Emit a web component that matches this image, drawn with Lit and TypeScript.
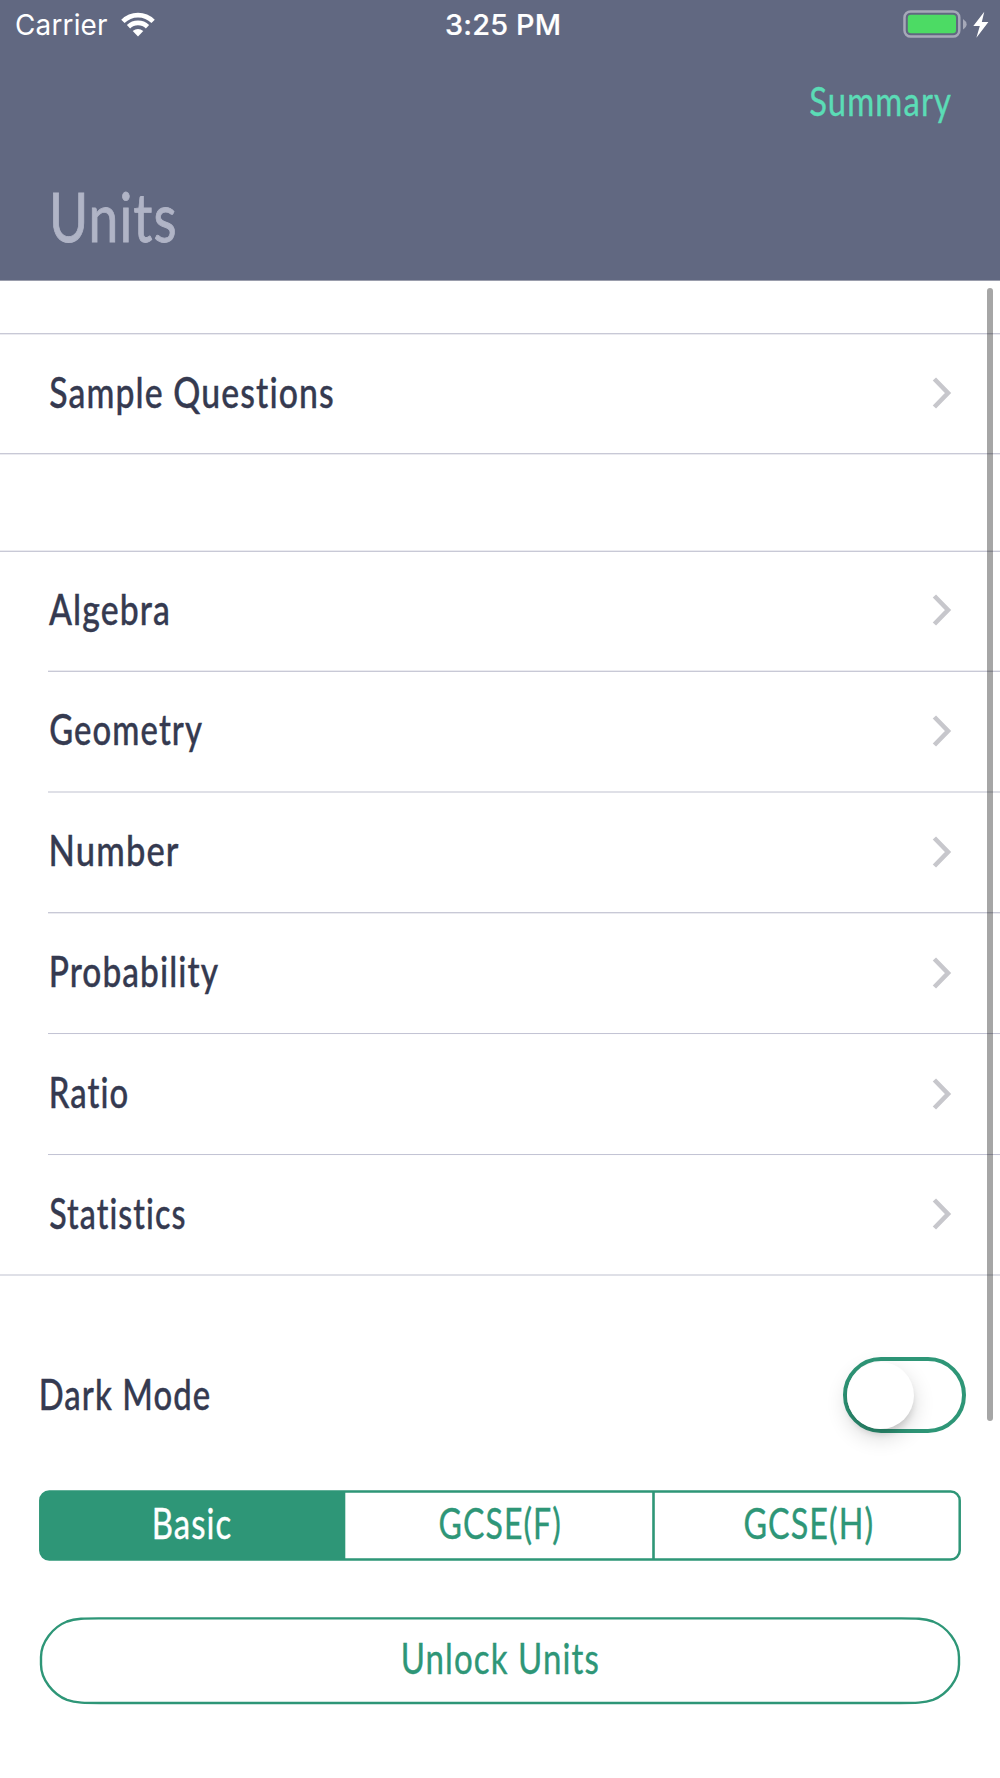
import { LitElement, html, css } from "lit";
import { customElement, property, state } from "lit/decorators.js";

/** One line of text whose drawn glyphs span exactly `span` pixels. */
@customElement("fit-label")
class FitLabel extends LitElement {
  @property() text = "";
  @property({ type: Number }) span = 100;
  @state() private scale = 1;
  @state() private shift = 0;

  static styles = css`
    :host {
      display: block;
      flex: none;
      white-space: pre;
      line-height: 1.2;
    }
    .line {
      display: block;
      width: max-content;
      transform-origin: 0 0;
    }
  `;

  firstUpdated() {
    const style = getComputedStyle(this);
    const ctx = document.createElement("canvas").getContext("2d") as any;
    ctx.font = `${style.fontWeight} ${style.fontSize} ${style.fontFamily}`;
    ctx.letterSpacing = style.letterSpacing === "normal" ? "0px" : style.letterSpacing;
    const m = ctx.measureText(this.text);
    const ink = m.actualBoundingBoxLeft + m.actualBoundingBoxRight;
    this.scale = this.span / ink;
    this.shift = m.actualBoundingBoxLeft * this.scale;
  }

  render() {
    return html`<style>:host { width: ${this.span}px; }</style
      ><span class="line" style="transform: translateX(${this.shift}px) scaleX(${this.scale})">${this.text}</span>`;
  }
}

interface Unit {
  name: string;
  span: number;
  inset: number;
  rule: "down" | "up" | "even" | "thin";
  height: number;
}

const units: Unit[] = [
  { name: "Algebra", span: 119, inset: 49, rule: "up", height: 118 },
  { name: "Geometry", span: 152, inset: 50, rule: "even", height: 119 },
  { name: "Number", span: 127.8, inset: 51, rule: "down", height: 119 },
  { name: "Probability", span: 167, inset: 51, rule: "thin", height: 119 },
  { name: "Ratio", span: 76.3, inset: 51, rule: "thin", height: 119 },
  { name: "Statistics", span: 134.3, inset: 50, rule: "even", height: 118 },
];

@customElement("app-root")
class AppRoot extends LitElement {
  static styles = css`
    :host {
      display: block;
      width: 1000px;
      height: 1778px;
      overflow: hidden;
      position: relative;
      background: #fff;
      color: #353a50;
      font-family: Lato, "Open Sans", sans-serif;
      font-size: 42.5px;
      font-weight: 500;
      letter-spacing: 1.4px;
      -webkit-text-stroke: 0.4px currentColor;
    }
    .header {
      box-sizing: border-box;
      height: 281px;
      background: #616881;
      border-bottom: 1px solid #9a9dac;
      display: flex;
      flex-direction: column;
    }
    .status {
      height: 50px;
      display: grid;
      grid-template-columns: 446px 456px 1fr;
      color: #fff;
      font-family: Inter, Roboto, sans-serif;
      font-size: 28px;
      font-weight: 400;
      letter-spacing: 0.2px;
      -webkit-text-stroke: 0;
    }
    .carrier {
      display: flex;
      gap: 13px;
      padding: 9px 0 0 16px;
    }
    .wifi {
      display: block;
      margin-top: 2px;
    }
    .time {
      padding-top: 9px;
      font-weight: 500;
      -webkit-text-stroke: 0.2px currentColor;
    }
    .power {
      display: block;
      margin-top: 9px;
    }
    .actions {
      display: flex;
      justify-content: flex-end;
      padding: 27px 49px 0 0;
      color: #5bdcb6;
      font-size: 40.5px;
      font-weight: 400;
    }
    .title {
      padding: 50px 0 0 52.7px;
      color: #b0b4c6;
      font-size: 67px;
      font-weight: 400;
      -webkit-text-stroke: 0.9px currentColor;
    }
    .gap-top {
      height: 52px;
    }
    .gap {
      height: 95px;
    }
    .row {
      display: flex;
      align-items: center;
      justify-content: space-between;
      box-sizing: border-box;
      padding: 0 48px 2px 0;
    }
    .name {
      padding-bottom: 4px;
    }
    .chevron {
      display: block;
    }
    .rule {
      height: 2px;
    }
    .inset {
      margin-left: 48px;
    }
    .down {
      background: linear-gradient(#c8c9d6 50%, #ebebf0 50%);
    }
    .up {
      background: linear-gradient(#ebebf0 50%, #c8c9d6 50%);
    }
    .even {
      background: #dfe0e7;
    }
    .thin {
      background: linear-gradient(#c3c4d4 50%, #fdfdfe 50%);
    }
    .mode {
      display: flex;
      justify-content: space-between;
      align-items: center;
      padding: 0 34px 0 41px;
      margin-top: 81px;
      height: 76px;
    }
    .toggle {
      box-sizing: border-box;
      width: 123px;
      height: 76px;
      border: 4px solid #2e9677;
      border-radius: 38px;
      display: flex;
      align-items: center;
    }
    .knob {
      width: 67px;
      height: 67px;
      border-radius: 50%;
      background: #fff;
      box-shadow: 0 8px 21px rgba(0, 0, 0, 0.16), 0 6px 6px -1px rgba(0, 0, 0, 0.12);
    }
    .segments {
      position: relative;
      display: grid;
      grid-template-columns: 306px 310px 307px;
      width: 923px;
      height: 71px;
      margin: 57px 0 0 39px;
      color: #2e9677;
      font-weight: 400;
    }
    .segment {
      position: relative;
      display: flex;
      justify-content: center;
      padding-top: 7px;
    }
    .selected {
      color: #fff;
    }
    .frame {
      position: absolute;
      inset: 0;
      display: block;
    }
    .unlock {
      position: relative;
      display: flex;
      justify-content: center;
      width: 923px;
      height: 90px;
      margin: 55px 0 0 39px;
      color: #2e9677;
      font-weight: 400;
    }
    .unlock-text {
      position: relative;
      padding-top: 16px;
    }
    .scrollbar {
      position: absolute;
      left: 987px;
      top: 288px;
      width: 6px;
      height: 1133px;
      border-radius: 3px;
      background: rgba(0, 0, 0, 0.35);
    }
  `;

  private row(name: string, span: number, inset: number, height: number) {
    return html`<div class="row" style="height:${height}px;padding-left:${inset}px">
      <fit-label class="name" .text=${name} .span=${span}></fit-label>
      <svg class="chevron" width="20" height="34" viewBox="0 0 20 34">
        <path d="M2.4 3 L16 17 L2.4 31" fill="none" stroke="#c7c7cc" stroke-width="4.6" />
      </svg>
    </div>`;
  }

  render() {
    return html`
      <div class="header">
        <div class="status">
          <div class="carrier">
            <fit-label .text=${"Carrier"} .span=${91}></fit-label>
            <svg class="wifi" width="36" height="27" viewBox="120 11 36 27">
              <g fill="none" stroke="#fff" stroke-width="4.7">
                <path d="M122.9 21.4 A21.3 21.3 0 0 1 153.1 21.4" />
                <path d="M128.5 26.7 A13.8 13.8 0 0 1 147.5 26.7" />
              </g>
              <path d="M132.7 31 Q138 26.8 143.3 31 L138 36.5 Z" fill="#fff" />
            </svg>
          </div>
          <div class="time"><fit-label .text=${"3:25 PM"} .span=${113.5}></fit-label></div>
          <svg class="power" width="88" height="30" viewBox="902 9 88 30">
            <rect x="904.5" y="11.4" width="54.8" height="25.2" rx="6.2" fill="none" stroke="#a6a9b8" stroke-width="2.5" />
            <rect x="907.8" y="14.8" width="48.2" height="18.4" rx="3.2" fill="#4cdb64" />
            <path d="M963 19 Q966.6 21.5 966.6 24.2 Q966.6 27 963 29.4 Z" fill="#a6a9b8" />
            <path d="M984.3 11.8 L973.3 25.9 L979.8 25.9 L976.4 37.8 L988.4 22 L981.8 22 Z" fill="#fff" />
          </svg>
        </div>
        <div class="actions"><fit-label .text=${"Summary"} .span=${141}></fit-label></div>
        <div class="title"><fit-label .text=${"Units"} .span=${122}></fit-label></div>
      </div>

      <div class="gap-top"></div>
      <div class="rule down"></div>
      ${this.row("Sample Questions", 282.6, 50, 118)}
      <div class="rule down"></div>
      <div class="gap"></div>
      <div class="rule up"></div>
      ${units.map(
        (u, i) => html`${this.row(u.name, u.span, u.inset, u.height)}
          <div class="rule ${u.rule} ${i < units.length - 1 ? "inset" : ""}"></div>`
      )}

      <div class="mode">
        <fit-label class="name" .text=${"Dark Mode"} .span=${168}></fit-label>
        <div class="toggle"><div class="knob"></div></div>
      </div>

      <div class="segments">
        <svg class="frame" width="923" height="71" viewBox="0 0 923 71">
          <rect x="1.3" y="1.6" width="919.4" height="67.8" rx="9" fill="none" stroke="#2e9677" stroke-width="2.5" />
          <path d="M306.3 2 V69 H10 Q1.5 69 1.5 60 V11 Q1.5 2 10 2 Z" fill="#2e9677" />
          <path d="M614.5 2 V69" stroke="#2e9677" stroke-width="2.6" />
        </svg>
        <div class="segment selected"><fit-label .text=${"Basic"} .span=${77}></fit-label></div>
        <div class="segment"><fit-label .text=${"GCSE(F)"} .span=${119.8}></fit-label></div>
        <div class="segment"><fit-label .text=${"GCSE(H)"} .span=${127}></fit-label></div>
      </div>

      <div class="unlock">
        <svg class="frame" width="923" height="90" viewBox="39 1616 923 90">
          <path
            d="M102 1618.4 C86 1618.4 76 1618.2 67 1621.5 C53 1627 41 1642 41 1657 V1664.4 C41 1679.4 53 1694.4 67 1699.9 C76 1703.1 86 1703 102 1703 H898 C914 1703 924 1703.1 933 1699.9 C947 1694.4 959 1679.4 959 1664.4 V1657 C959 1642 947 1627 933 1621.5 C924 1618.2 914 1618.4 898 1618.4 Z"
            fill="none" stroke="#2e9677" stroke-width="2.4" />
        </svg>
        <div class="unlock-text"><fit-label .text=${"Unlock Units"} .span=${194.7}></fit-label></div>
      </div>

      <div class="scrollbar"></div>
    `;
  }
}
